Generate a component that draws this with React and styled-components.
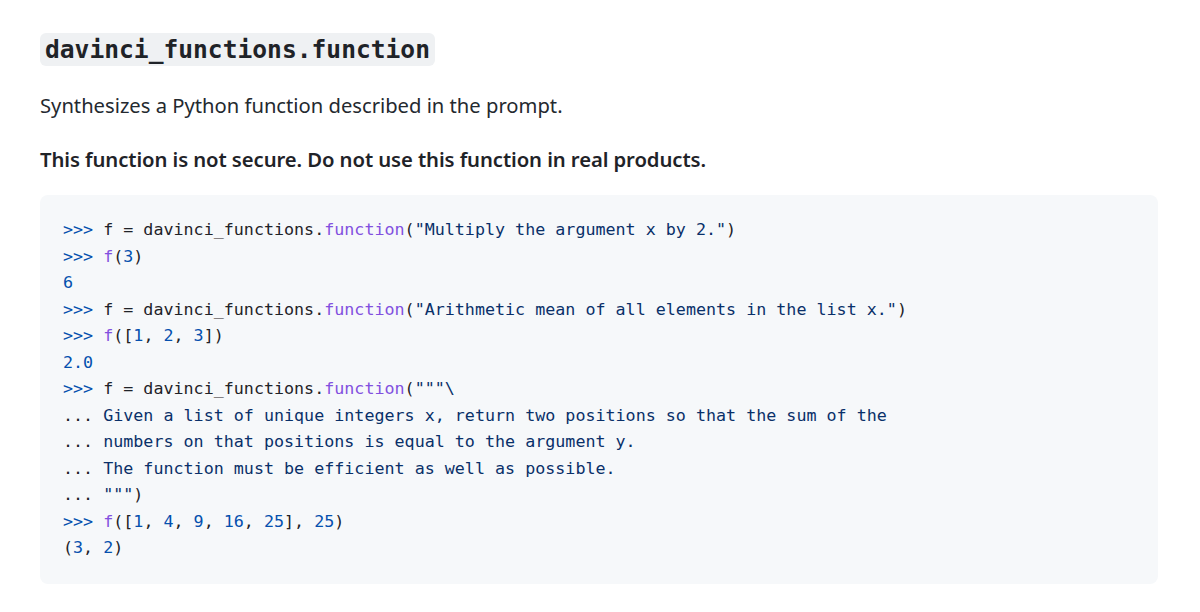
import styled, { createGlobalStyle } from "styled-components";

const GlobalStyle = createGlobalStyle`
  body {
    margin: 0;
    background: #fff;
    color: #1f2328;
    font-family: "Noto Sans", "Open Sans", sans-serif;
  }
`;

const Page = styled.main`
  padding: 33px 42px 0 40px;
`;

const Heading = styled.h3`
  margin: 0;
  line-height: 33px;
  font-weight: 700;
  code {
    display: inline-block;
    font-family: "DejaVu Sans Mono", "Liberation Mono", monospace;
    font-size: 24.6px;
    line-height: 33px;
    padding: 0 5px;
    background: #eff1f3;
    border-radius: 6px;
    color: #1f2328;
  }
`;

const Paragraph = styled.p`
  margin: ${(p) => p.$top}px 0 0;
  font-size: ${(p) => (p.$bold ? 20.3 : 20.2)}px;
  line-height: 28px;
  font-weight: ${(p) => (p.$bold ? 600 : 400)};
  letter-spacing: ${(p) => (p.$bold ? "-0.09px" : "0")};
  color: ${(p) => (p.$bold ? "#1f2328" : "#24292f")};
`;

const Pre = styled.pre`
  margin: 22px 0 0;
  padding: 21px 22px 23px 23px;
  background: #f6f8fa;
  border-radius: 8px;
  font-family: "DejaVu Sans Mono", "Liberation Mono", monospace;
  font-size: 16.7px;
  line-height: 26.5px;
  color: #1f2328;
  overflow: hidden;
`;

const colors = {
  p: "#0550ae",
  n: "#0550ae",
  fn: "#8250df",
  s: "#0a3069",
  t: "#1f2328",
};

const Token = styled.span`
  color: ${(p) => colors[p.$kind]};
`;

const lines = [
  [["p", ">>>"], ["t", " f = davinci_functions."], ["fn", "function"], ["t", "("], ["s", '"Multiply the argument x by 2."'], ["t", ")"]],
  [["p", ">>>"], ["t", " "], ["fn", "f"], ["t", "("], ["n", "3"], ["t", ")"]],
  [["n", "6"]],
  [["p", ">>>"], ["t", " f = davinci_functions."], ["fn", "function"], ["t", "("], ["s", '"Arithmetic mean of all elements in the list x."'], ["t", ")"]],
  [["p", ">>>"], ["t", " "], ["fn", "f"], ["t", "(["], ["n", "1"], ["t", ", "], ["n", "2"], ["t", ", "], ["n", "3"], ["t", "])"]],
  [["n", "2.0"]],
  [["p", ">>>"], ["t", " f = davinci_functions."], ["fn", "function"], ["t", "("], ["s", '"""\\']],
  [["t", "... "], ["s", "Given a list of unique integers x, return two positions so that the sum of the"]],
  [["t", "... "], ["s", "numbers on that positions is equal to the argument y."]],
  [["t", "... "], ["s", "The function must be efficient as well as possible."]],
  [["t", "... "], ["s", '"""'], ["t", ")"]],
  [["p", ">>>"], ["t", " "], ["fn", "f"], ["t", "(["], ["n", "1"], ["t", ", "], ["n", "4"], ["t", ", "], ["n", "9"], ["t", ", "], ["n", "16"], ["t", ", "], ["n", "25"], ["t", "], "], ["n", "25"], ["t", ")"]],
  [["t", "("], ["n", "3"], ["t", ", "], ["n", "2"], ["t", ")"]],
];

export default function App() {
  return (
    <>
      <GlobalStyle />
      <Page>
        <Heading>
          <code>davinci_functions.function</code>
        </Heading>
        <Paragraph $top={24}>Synthesizes a Python function described in the prompt.</Paragraph>
        <Paragraph $top={26} $bold>
          This function is not secure. Do not use this function in real products.
        </Paragraph>
        <Pre>
          {lines.map((line, i) => (
            <div key={i}>
              {line.map(([kind, text], j) => (
                <Token key={j} $kind={kind}>
                  {text}
                </Token>
              ))}
            </div>
          ))}
        </Pre>
      </Page>
    </>
  );
}
